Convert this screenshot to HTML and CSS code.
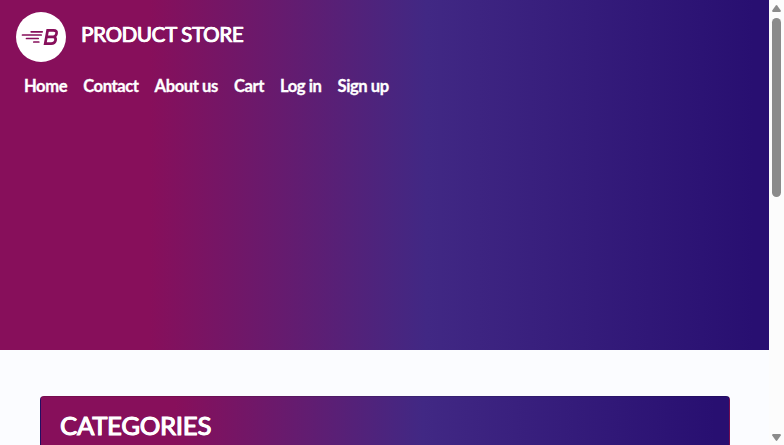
FILE: index.html
```html
<!DOCTYPE html>
<html lang="en">
<head>
<meta charset="utf-8">
<title>PRODUCT STORE</title>
<link rel="stylesheet" href="styles.css">
</head>
<body>
<div class="viewport">
  <main class="page">
    <header class="hero">
      <a class="brand">
        <svg class="logo" viewBox="0 0 50 50" width="50" height="50" aria-hidden="true">
          <circle cx="25" cy="25" r="25" fill="#fff"/>
          <g stroke="#870f5b" stroke-width="1.7" stroke-linecap="round">
            <path d="M15.2 19.8H26.2M6.5 23H25.2M10.5 26.5H22.2M17.8 30H22.8"/>
          </g>
          <path d="M31.6 18.4H37.5Q41.3 18.4 40.5 21.7Q39.9 24.3 37.4 24.8Q40.3 25.8 39.5 28.6Q38.6 31.6 35.2 31.6H29.2ZM30.4 24.9H37.8" fill="none" stroke="#870f5b" stroke-width="2.7" stroke-linejoin="miter"/>
        </svg>
        <span class="title">PRODUCT STORE</span>
      </a>
      <nav class="nav">
        <a>Home</a><a>Contact</a><a>About us</a><a>Cart</a><a>Log in</a><a>Sign up</a>
      </nav>
    </header>
    <section class="categories">
      <h2>CATEGORIES</h2>
    </section>
  </main>
  <div class="scrollbar">
    <svg width="9" height="7" viewBox="0 0 9 7"><path d="M3.8.5Q4.5-.3 5.2.5L8.8 5.5Q9 7 8 7H1Q0 7 .2 5.5Z" fill="#8b8b8b"/></svg>
    <div class="thumb"></div>
    <svg class="down" width="9" height="7" viewBox="0 0 9 7"><path d="M3.8 6.5Q4.5 7.3 5.2 6.5L8.8 1.5Q9 0 8 0H1Q0 0 .2 1.5Z" fill="#8b8b8b"/></svg>
  </div>
</div>
</body>
</html>
```
FILE: styles.css
```css
* { box-sizing: border-box; }
body {
  margin: 0;
  overflow: hidden;
  font-family: Lato, sans-serif;
  color: #fff;
  background: #fbfcff;
}
.viewport { display: flex; height: 445px; overflow: hidden; }
.page { flex: 1; }
.hero, .categories {
  background-image: linear-gradient(90deg, #870f5b 19.5%, #412884 55.5%, #280f71 98%);
}
.hero { height: 350px; padding: 12px 16px; }
.brand { display: flex; height: 50px; }
.logo { margin-right: 15px; }
.title, h2 {
  font-weight: 400;
  -webkit-text-stroke: 0.7px #fff;
  text-shadow: 0.5px 0 #fff;
}
.title {
  padding-top: 7px;
  font-size: 20.5px;
  line-height: 30px;
  letter-spacing: -0.3px;
}
.nav {
  display: flex;
  gap: 16px;
  padding: 12px 8px 0;
  font-size: 16.6px;
  line-height: 24px;
  font-weight: 700;
  letter-spacing: -0.42px;
  -webkit-text-stroke: 0.3px #fff;
}
.categories {
  height: 80px;
  margin: 46px 39px 0 40px;
  padding: 10px 19px;
  border: 1px solid rgba(0, 0, 0, .125);
  border-radius: 4px;
}
h2 {
  margin: 0;
  font-size: 25.5px;
  line-height: 36px;
  letter-spacing: -0.15px;
  -webkit-text-stroke-width: 1px;
}
.scrollbar {
  display: flex;
  flex-direction: column;
  align-items: center;
  width: 15px;
  padding: 5px 0 4px;
  background: #fcfcfc;
}
.thumb { width: 9px; height: 179px; margin-top: 6px; border-radius: 5px; background: #8b8b8b; }
.down { margin-top: auto; }
```
